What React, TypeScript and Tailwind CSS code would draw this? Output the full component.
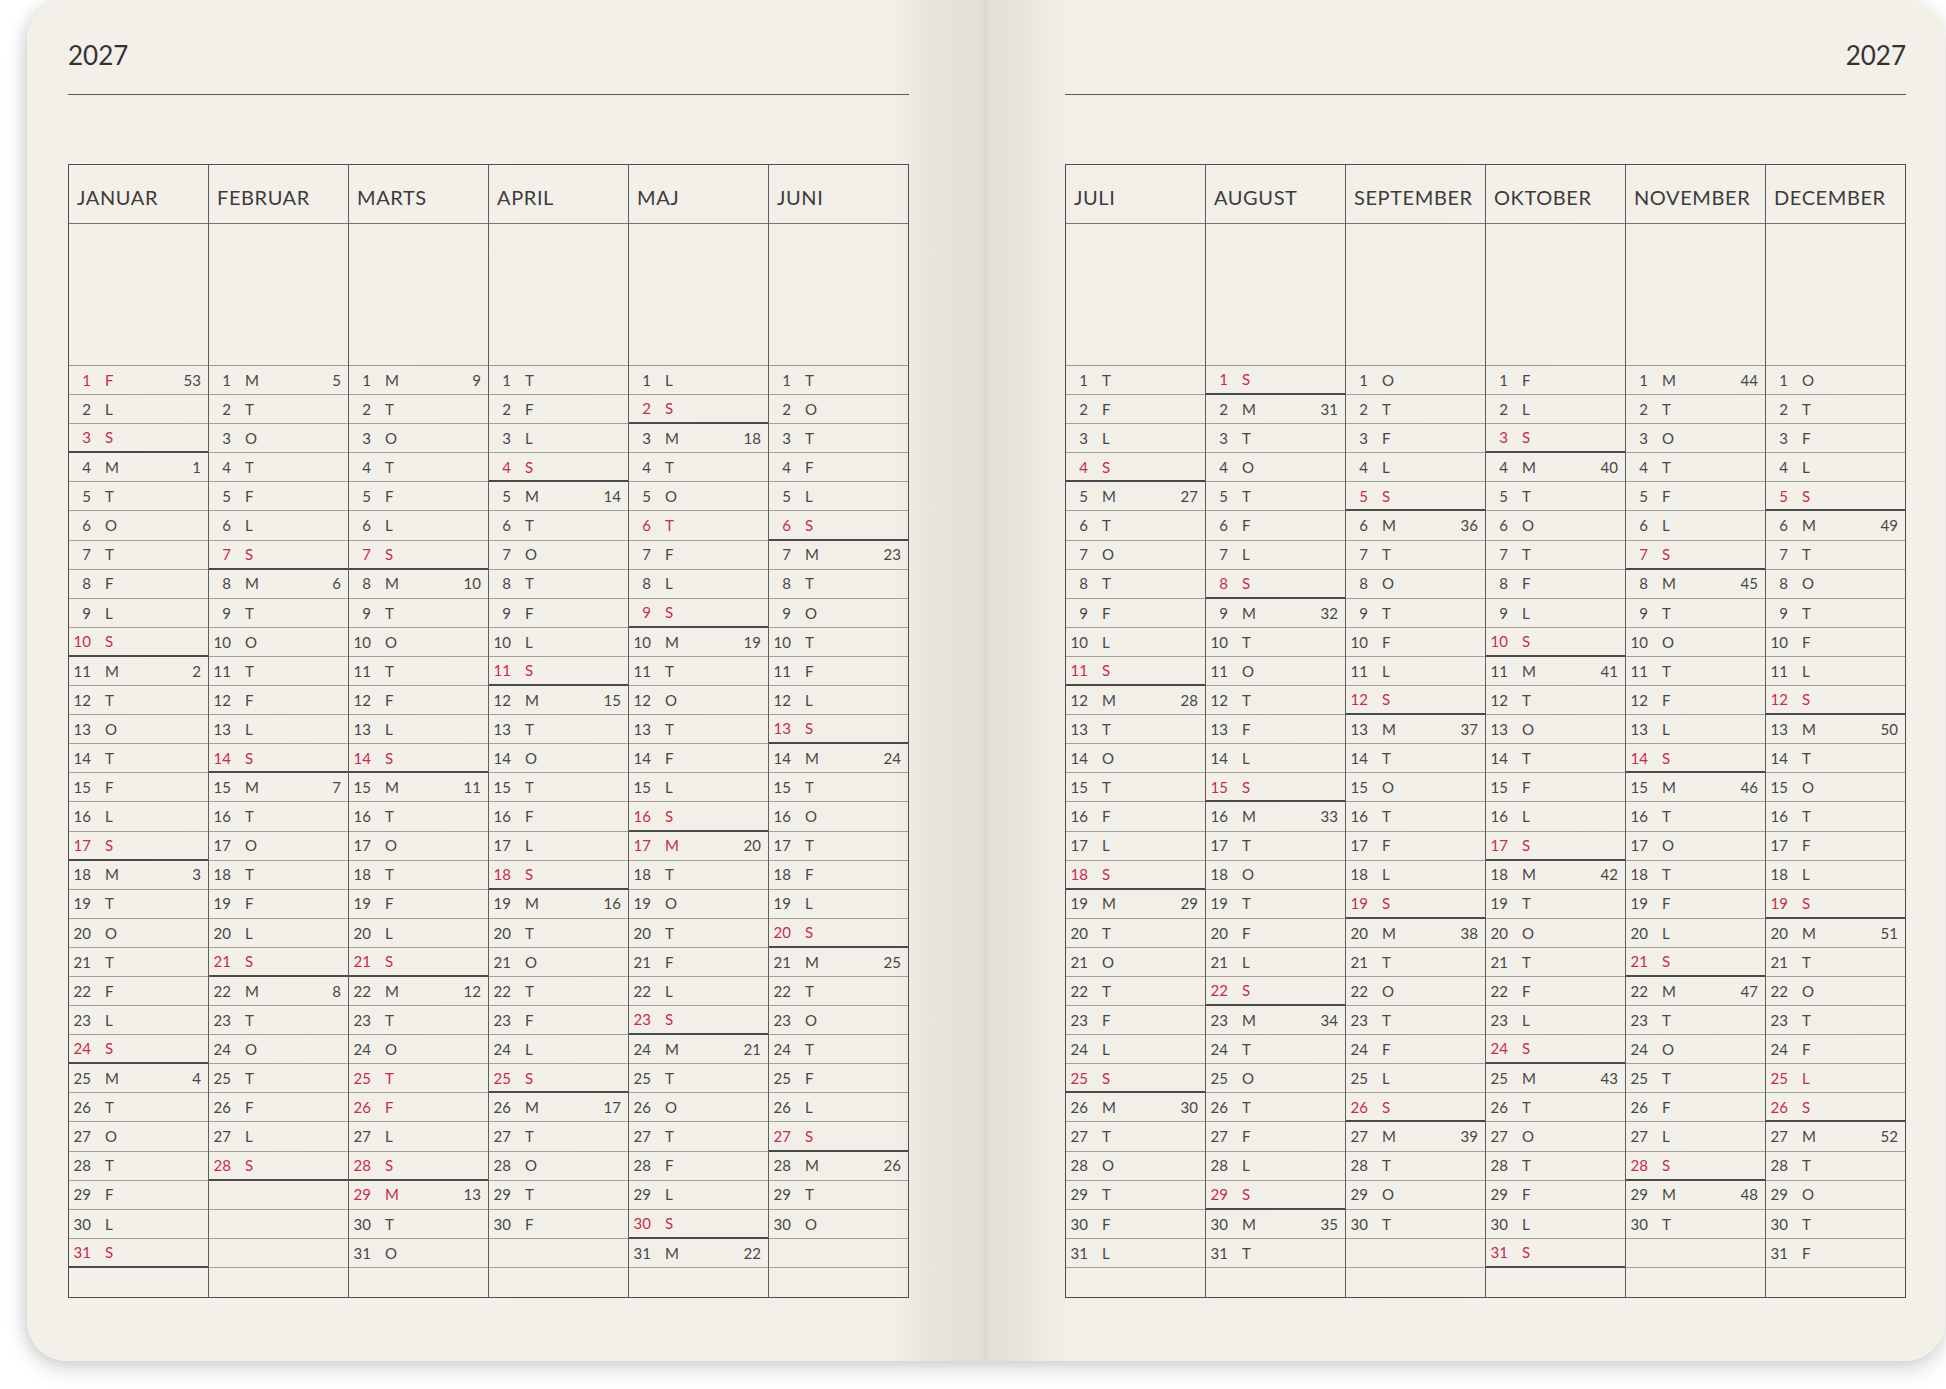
import React from 'react';

const LETTERS = ['S', 'M', 'T', 'O', 'T', 'F', 'L'];
const LEFT = ['JANUAR', 'FEBRUAR', 'MARTS', 'APRIL', 'MAJ', 'JUNI'];
const RIGHT = ['JULI', 'AUGUST', 'SEPTEMBER', 'OKTOBER', 'NOVEMBER', 'DECEMBER'];
const HOLIDAYS = new Set(['0-1', '2-25', '2-26', '2-29', '4-6', '4-17', '11-25']);

type Cell = { d: number; letter: string; red: boolean; week: number | null; sunday: boolean } | null;

function dayOfYear(m: number, d: number) {
  return Math.round((Date.UTC(2027, m, d) - Date.UTC(2027, 0, 1)) / 86400000) + 1;
}

function monthCells(m: number): Cell[] {
  const n = new Date(Date.UTC(2027, m + 1, 0)).getUTCDate();
  const cells: Cell[] = [];
  for (let d = 1; d <= 32; d++) {
    if (d > n) {
      cells.push(null);
      continue;
    }
    const wd = new Date(Date.UTC(2027, m, d)).getUTCDay();
    let week: number | null = null;
    if (wd === 1) week = Math.floor((dayOfYear(m, d) - 4) / 7) + 1;
    if (m === 0 && d === 1) week = 53;
    cells.push({ d, letter: LETTERS[wd], red: wd === 0 || HOLIDAYS.has(`${m}-${d}`), week, sunday: wd === 0 });
  }
  return cells;
}

function MonthColumn({ name, m, first }: { name: string; m: number; first: boolean }) {
  const cells = monthCells(m);
  return (
    <div className={first ? 'w-[139px] flex flex-col' : 'w-[140px] flex flex-col border-l border-[#5e5e5e]'}>
      <div className="h-[59px] border-b border-[#747470] flex items-center pl-[8px] pt-[5px] text-[20px] tracking-[0.03em] text-[#3c3c3c] font-normal">
        {name}
      </div>
      <div className="h-[142px] border-b border-[#9c9992]" />
      {cells.map((c, i) => {
        const last = i === 31;
        const border = last
          ? ''
          : c && c.sunday
          ? 'border-b-2 border-[#4a4a4a]'
          : 'border-b border-[#a3a09a]';
        const col = c && c.red ? 'text-[#c32d4e]' : 'text-[#474747]';
        return (
          <div key={i} className={`h-[29.1px] flex items-center text-[15px] ${border}`}>
            {c && (
              <>
                <span className={`w-[22px] text-right ${col}`}>{c.d}</span>
                <span className={`ml-[14px] ${col}`}>{c.letter}</span>
                {c.week !== null && <span className="ml-auto pr-[7px] text-[#474747]">{c.week}</span>}
              </>
            )}
          </div>
        );
      })}
    </div>
  );
}

function Table({ names, offset }: { names: string[]; offset: number }) {
  return (
    <div className="w-[841px] flex border border-[#4e4e4e]">
      {names.map((n, i) => (
        <MonthColumn key={n} name={n} m={offset + i} first={i === 0} />
      ))}
    </div>
  );
}

export default function App() {
  return (
    <div className="w-[1946px] h-[1389px] bg-white overflow-hidden [font-family:Lato,'Open_Sans',sans-serif] font-normal">
      <div className="flex ml-[27px] w-[1918px] h-[1361px] rounded-[40px] shadow-[0_8px_22px_rgba(0,0,0,0.16),-4px_0_14px_rgba(0,0,0,0.08)]">
        <div className="w-[960px] h-full rounded-l-[40px] pl-[41px] pt-[42px] bg-[linear-gradient(to_right,#f3f0e9_0%,#f2efe8_90%,#e8e5df_94%,#e3e0da_99%,#dbd8d1_100%)]">
          <div className="text-[26px] leading-[26px] text-[#333333]">2027</div>
          <div className="mt-[26px] w-[841px] h-px bg-[#5a5a5a]" />
          <div className="mt-[69px]">
            <Table names={LEFT} offset={0} />
          </div>
        </div>
        <div className="w-[958px] h-full rounded-r-[40px] pl-[78px] pt-[42px] bg-[linear-gradient(to_right,#e2dfd9_0%,#e6e3dd_3%,#eeebe4_6%,#f2efe8_9%,#f3f0e9_100%)]">
          <div className="w-[841px] text-right text-[26px] leading-[26px] text-[#333333]">2027</div>
          <div className="mt-[26px] w-[841px] h-px bg-[#5a5a5a]" />
          <div className="mt-[69px]">
            <Table names={RIGHT} offset={6} />
          </div>
        </div>
      </div>
    </div>
  );
}
